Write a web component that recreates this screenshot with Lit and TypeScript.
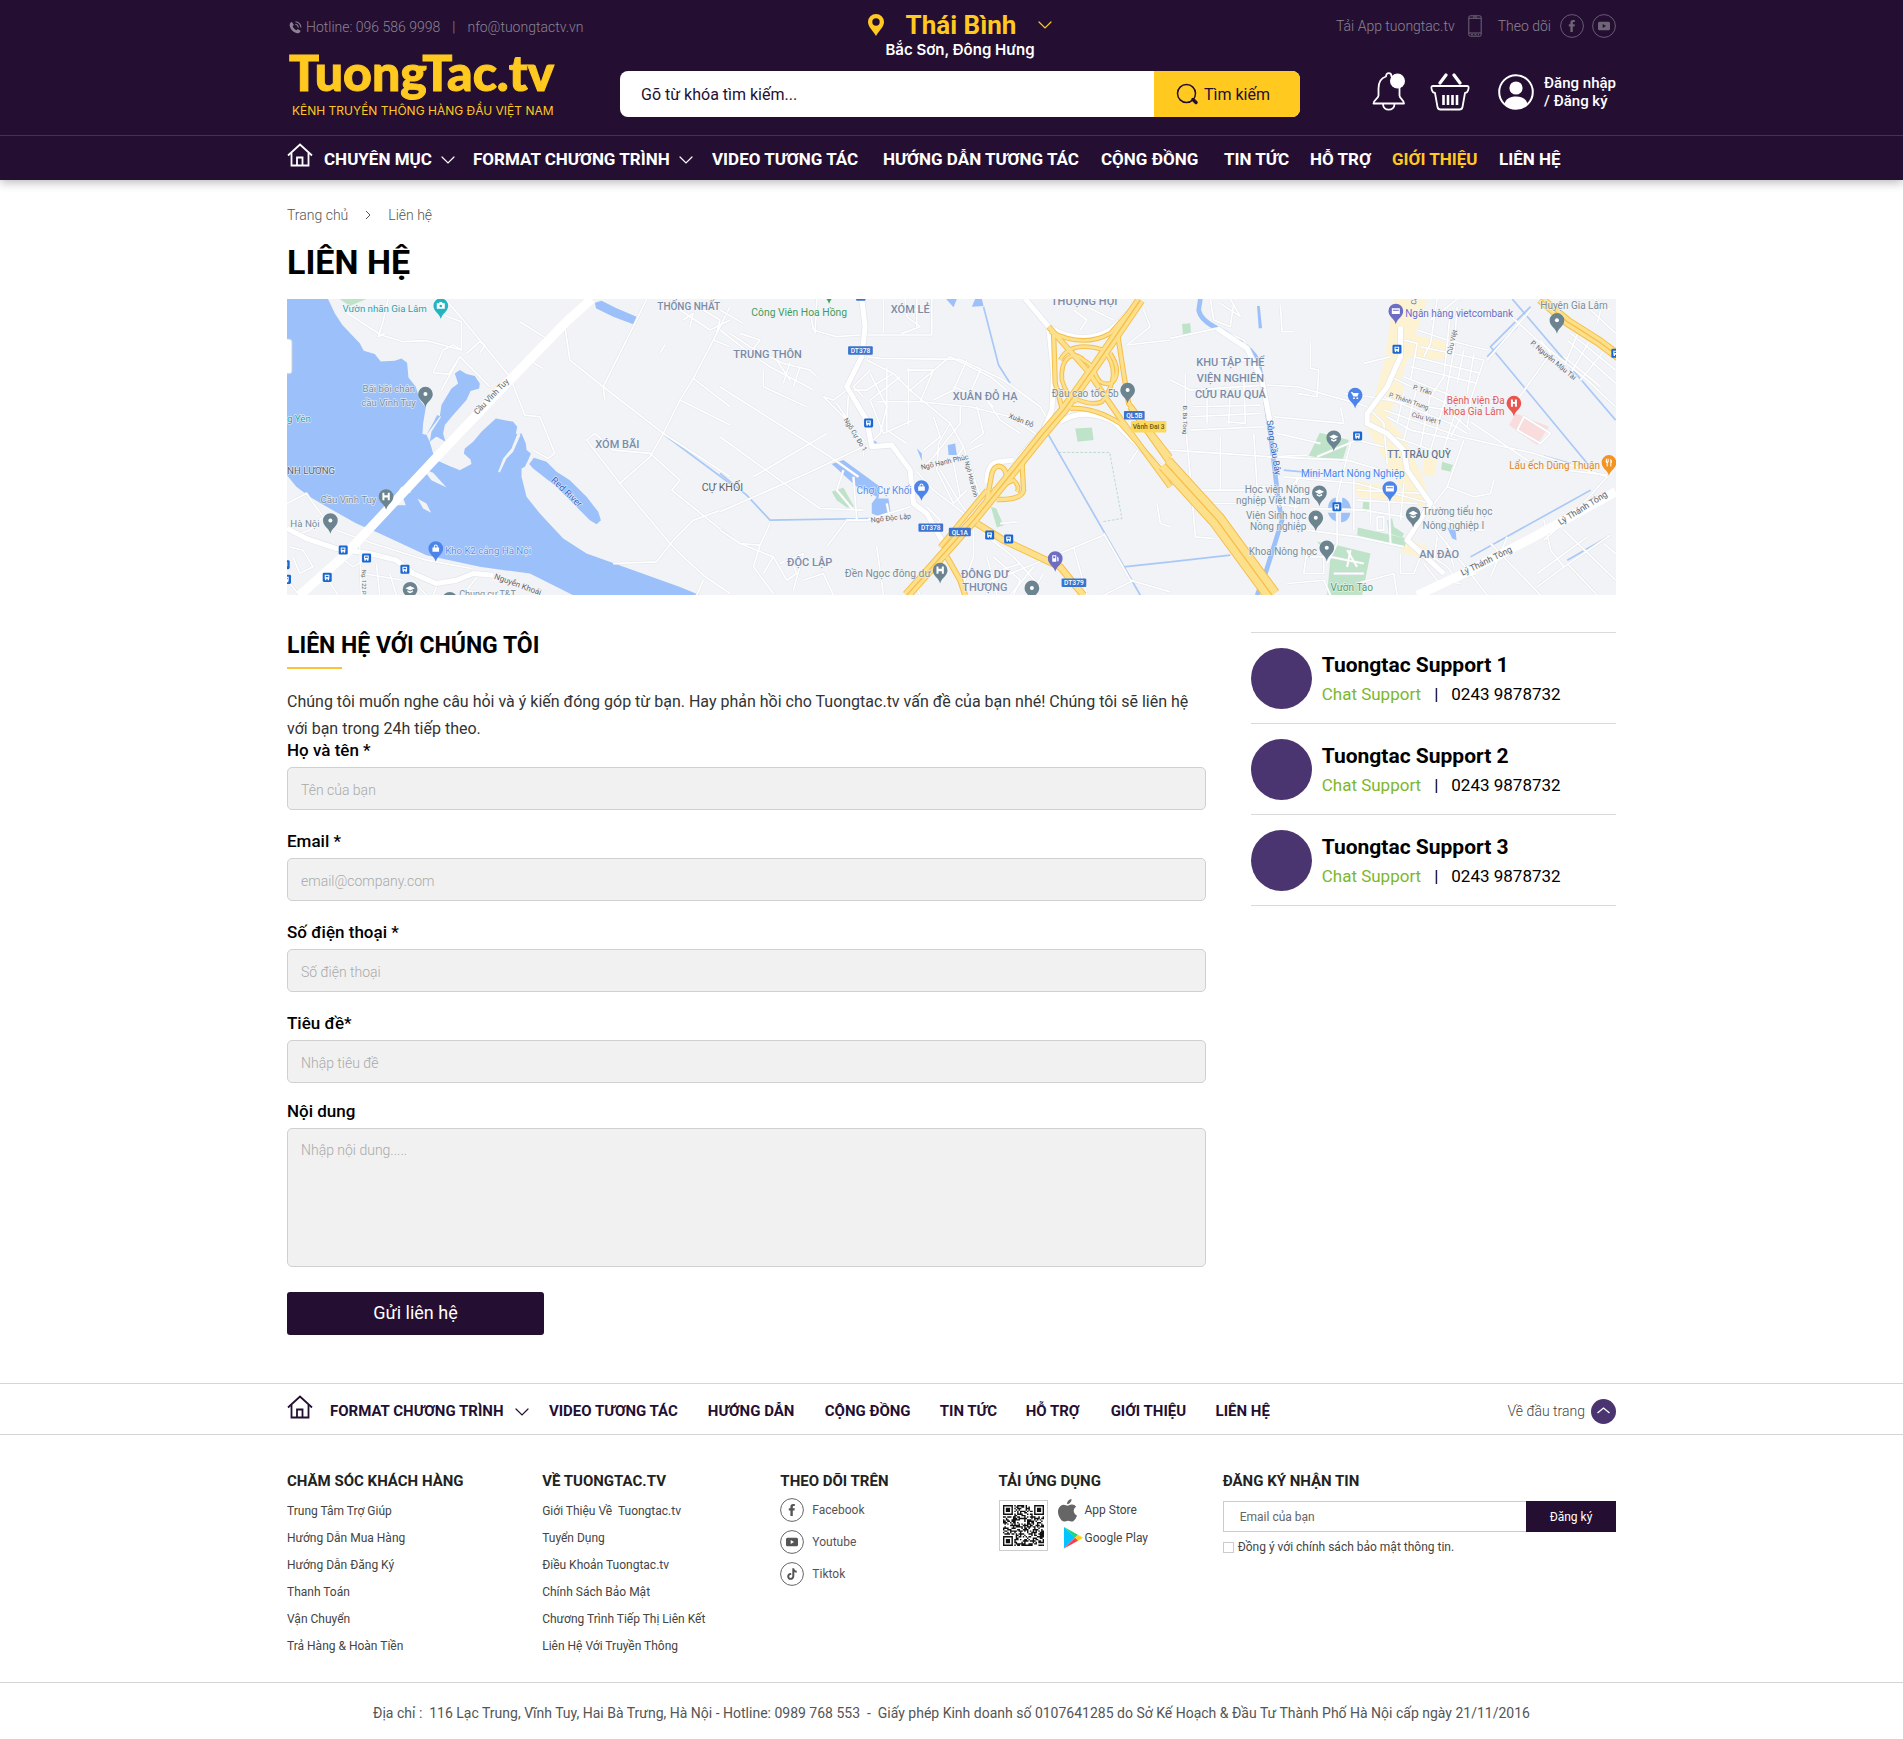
import { LitElement, html, svg, css, nothing } from "lit";
import { customElement } from "lit/decorators.js";
import { classMap } from "lit/directives/class-map.js";

/* ---------- icons ---------- */

const chevronDown = html`<svg class="chevron" viewBox="0 0 14 8" width="14" height="8" aria-hidden="true">
  <path d="M1 1 L7 7 L13 1" fill="none" stroke="currentColor" stroke-width="1.2" stroke-linecap="round" />
</svg>`;

const homeIcon = html`<svg viewBox="0 0 26 24" width="26" height="24" aria-hidden="true">
  <g fill="none" stroke="currentColor" stroke-width="1.8" stroke-linejoin="miter">
    <path d="M1 12.5 L13 1.5 L25 12.5" />
    <path d="M4.5 10 V22.5 H21.5 V10" />
    <path d="M10 22 V14.5 H15.5 V22" />
  </g>
</svg>`;

const facebookIcon = (size: number) => html`<svg viewBox="0 0 24 24" width=${size} height=${size} aria-hidden="true">
  <circle cx="12" cy="12" r="11.4" fill="none" stroke="currentColor" stroke-width="0.9" />
  <path fill="currentColor" d="M10.4 18v-5.4H8.8v-2.3h1.6V8.7c0-1.9 1-2.8 2.7-2.8h1.7v2.2h-1.1c-.7 0-.9.3-.9.9v1.3h2l-.3 2.3h-1.7V18z" />
</svg>`;

const youtubeIcon = (size: number) => html`<svg viewBox="0 0 24 24" width=${size} height=${size} aria-hidden="true">
  <circle cx="12" cy="12" r="11.4" fill="none" stroke="currentColor" stroke-width="0.9" />
  <path fill="currentColor" fill-rule="evenodd" d="M7.5 7.8h9a1.5 1.5 0 0 1 1.5 1.5v5.4a1.5 1.5 0 0 1-1.5 1.5h-9A1.5 1.5 0 0 1 6 14.7V9.3a1.5 1.5 0 0 1 1.5-1.5zM10.7 10v4l3.3-2z" />
</svg>`;

const tiktokIcon = (size: number) => html`<svg viewBox="0 0 24 24" width=${size} height=${size} aria-hidden="true">
  <circle cx="12" cy="12" r="11.4" fill="none" stroke="currentColor" stroke-width="0.9" />
  <path fill="currentColor" d="M12.3 6.2h1.9c.2 1.5 1 2.4 2.5 2.6v1.9c-.9 0-1.7-.3-2.4-.8v4c0 2.4-1.6 3.9-3.6 3.9s-3.5-1.5-3.5-3.4c0-2.2 1.8-3.7 4-3.4v2c-1.2-.3-2 .4-2 1.4 0 .9.7 1.5 1.5 1.5 1 0 1.6-.6 1.6-1.8z" />
</svg>`;

/* Code image: three finder squares around a seeded module field. */
const qrPath = (() => {
  const n = 29;
  let seed = 20211;
  const next = () => (seed = (seed * 1103515245 + 12345) % 2147483648) / 2147483648;
  const inFinder = (x: number, y: number) =>
    (x < 8 && y < 8) || (x > n - 9 && y < 8) || (x < 8 && y > n - 9);
  let d = "";
  for (let y = 0; y < n; y++)
    for (let x = 0; x < n; x++) if (!inFinder(x, y) && next() > 0.46) d += `M${x} ${y}h1v1h-1z`;
  for (const [x, y] of [[0, 0], [n - 7, 0], [0, n - 7]])
    d += `M${x} ${y}h7v1h-7zM${x} ${y + 6}h7v1h-7zM${x} ${y + 1}h1v5h-1zM${x + 6} ${y + 1}h1v5h-1zM${x + 2} ${y + 2}h3v3h-3z`;
  return d;
})();

/* ---------- data ---------- */

type NavEntry = { label: string; menu?: boolean; active?: boolean };

const mainNav: NavEntry[] = [
  { label: "CHUYÊN MỤC", menu: true },
  { label: "FORMAT CHƯƠNG TRÌNH", menu: true },
  { label: "VIDEO TƯƠNG TÁC" },
  { label: "HƯỚNG DẪN TƯƠNG TÁC" },
  { label: "CỘNG ĐỒNG" },
  { label: "TIN TỨC" },
  { label: "HỖ TRỢ" },
  { label: "GIỚI THIỆU", active: true },
  { label: "LIÊN HỆ" },
];

const footerNav: NavEntry[] = [
  { label: "FORMAT CHƯƠNG TRÌNH", menu: true },
  { label: "VIDEO TƯƠNG TÁC" },
  { label: "HƯỚNG DẪN" },
  { label: "CỘNG ĐỒNG" },
  { label: "TIN TỨC" },
  { label: "HỖ TRỢ" },
  { label: "GIỚI THIỆU" },
  { label: "LIÊN HỆ" },
];

const fields = [
  { id: "name", label: "Họ và tên *", hint: "Tên của bạn", type: "text" },
  { id: "email", label: "Email *", hint: "email@company.com", type: "email" },
  { id: "phone", label: "Số điện thoại *", hint: "Số điện thoại", type: "tel" },
  { id: "subject", label: "Tiêu đề*", hint: "Nhập tiêu đề", type: "text" },
];

const careLinks = ["Trung Tâm Trợ Giúp", "Hướng Dẫn Mua Hàng", "Hướng Dẫn Đăng Ký", "Thanh Toán", "Vận Chuyển", "Trả Hàng & Hoàn Tiền"];
const aboutLinks = ["Giới Thiệu Về  Tuongtac.tv", "Tuyển Dụng", "Điều Khoản Tuongtac.tv", "Chính Sách Bảo Mật", "Chương Trình Tiếp Thị Liên Kết", "Liên Hệ Với Truyền Thông"];

/* ---------- map ---------- */

type MapText = [x: number, y: number, text: string, color: string, size: number, opts?: { end?: boolean; mid?: boolean; bold?: boolean; rotate?: number }];

const SLATE = "#7c8ba8";
const GREY = "#7b8d99";
const DARK = "#5f6368";

/* Each sheet is drawn in its own coordinates and shifted to its place on the map. */
const sheets = [
  {
    dx: -22,
    green: ["M180 27L260 27L210 48Z"],
    water: [
      "M22 27L145 27L165 70L188 105L240 160L252 182L285 192L303 214L345 212L365 205L382 218L386 262L408 290L420 330L438 352L430 400L428 432L440 434L462 395L472 375L484 380L455 425L450 455L470 440L497 455L490 430L495 405L520 375L560 330L572 303L598 295L600 280L585 258L560 252L540 240L525 250L535 280L515 295L485 345L480 380L440 434L450 455L460 490L475 512L515 530L540 540L575 522L572 508L552 490L555 475L580 455L605 425L648 385L700 395L712 410L708 432L725 430L738 460L740 480L753 490L745 510L735 530L725 535L725 560L740 620L780 670L850 745L920 790L1060 840L1200 890L1260 915L880 915L750 850L600 830L440 795L300 730L230 700L150 655L90 620L50 590L22 555Z",
      "M762 503L800 515L830 545L870 570L920 620L955 665L963 690L950 702L930 690L880 640L830 590L760 535L748 522Z",
      "M945 38L965 32L1010 55L1070 80L1060 103L1000 80L948 55Z",
    ],
    islands: ["M428 535L460 548L500 592L455 570Z", "M413 625L440 640L454 668L430 655Z", "M340 625L365 590L395 590L392 608L365 610L378 645L345 645Z", "M655 545L670 505L695 475L715 425L722 435L700 485L680 505L660 547Z", "M450 455L470 440L497 456L480 485L515 530L475 512Z"],
    streams: ["M1150 432L1350 580"],
    thin: [
      "M190 60L280 120L305 135L370 155L440 152L545 180L545 95L490 75", "M325 27L310 95L295 140L315 130", "M545 180L520 165L490 180L460 248L508 252L540 200L485 300",
      "M500 32L555 95L690 260L735 375L780 380L825 490L805 505L760 480", "M540 200L630 290", "M560 190L600 155L615 165L600 190", "M720 95L800 145", "M745 210L790 235",
      "M855 110L870 210L970 290L1150 430L1350 560", "M1100 27L1070 90L970 290L975 330", "M1350 50L1300 150L1240 265L1200 330L1150 430L1110 500L1020 580", "M1300 150L1350 170",
      "M1240 265L1350 350", "M1200 330L1350 405", "M920 450L945 430L1000 480L1110 490L1200 570L1175 600L1350 740", "M920 450L1020 580L1170 760L1210 800L1270 855L1350 910",
      "M1350 650L1240 690L1180 750L1130 815L1000 820", "M1200 60L1290 120L1350 90", "M1210 90L1240 70L1230 110", "M1270 60L1320 90L1310 130", "M1270 870L1250 915", "M1140 190L1155 165",
      "M22 640L80 610L130 680L90 720L60 730", "M30 770L70 780L100 830L60 850L40 800", "M170 720L280 760L440 810L575 835", "M180 800L220 830L270 800", "M240 760L245 915", "M250 850L370 870", "M290 820L300 915", "M140 860L175 915",
      "M330 850L350 915", "M400 870L440 915", "M470 890L460 915", "M600 850L560 900L640 915", "M22 870L60 915",
    ],
    wide: ["M22 715L80 745L170 775L270 790L350 810L400 850L470 880L530 870L580 850L640 855"],
    huge: ["M60 915L190 800L490 480L700 260L860 95L935 27"],
    gold: [], hair: [],
  },
  {
    dx: 1298,
    green: ["M1065 415L1115 412L1120 450L1072 455Z", "M335 605L370 592L402 650L380 652L350 630Z", "M812 650L828 655L850 705L830 712Z"],
    water: ["M335 522L370 510L480 590L475 625L505 625L512 670L480 680L455 670L455 640L470 620L410 590Z", "M683 465L705 460L710 495L685 495Z", "M590 475L605 490L605 512Z", "M678 27L710 27L700 52Z", "M765 27L785 27L790 48L755 50Z", "M462 450L475 462L462 462Z"],
    islands: [],
    streams: ["M0 550L80 615L150 690L450 685", "M790 50L835 225L870 280", "M985 435L1260 915", "M1210 830L1350 815", "M935 330L960 350"],
    thin: [
      "M0 120L90 190L150 230L280 300", "M0 60L70 100", "M30 130L90 170L190 220L270 240L290 260", "M130 240L130 290L260 350", "M170 210L210 270", "M210 215L190 280", "M240 230L220 290", "M90 190L120 150L60 130", "M0 290L330 500L415 560", "M0 440L220 600L300 655L430 660",
      "M0 665L260 550L430 470", "M100 560L320 430", "M270 60L280 120L350 140L420 135", "M440 135L635 135L635 27", "M490 27L490 130", "M555 27L560 80L600 110L545 130", "M520 60L630 60", "M590 27L590 110", "M440 200L480 205L720 208L850 270L960 350L990 400",
      "M440 210L520 250L570 300L690 400L730 470L780 620", "M520 250L440 300L400 300", "M570 300L690 200", "M470 335L600 335L750 350L870 380L960 440", "M500 230L500 420L560 460", "M540 260L450 330L490 430L580 390", "M565 230L565 405", "M600 335L640 240L560 240", "M690 200L810 260L860 300",
      "M740 210L700 300L640 330", "M780 240L750 310L700 290", "M770 350L790 430L750 460", "M820 350L800 330L840 390L900 430", "M720 350L720 400L640 500L600 540", "M640 380L660 440L610 480", "M690 400L655 460L650 540L700 640", "M730 470L700 520L720 620", "M660 540L720 640L750 680", "M590 545L640 600L745 680", "M620 650L660 690L640 720", "M700 640L740 600",
      "M290 27L285 130", "M380 300L340 330L310 320L390 400L350 340", "M385 310L380 400L430 450", "M430 320L400 290L450 240", "M450 250L500 350L480 430L430 480L430 500", "M400 560L410 690", "M370 540L350 600L400 660", "M0 720L60 760L120 765L150 700", "M60 760L160 800L200 870L230 850L210 800", "M120 765L100 830L160 910", "M160 800L130 850", "M180 820L250 790L220 900", "M320 770L380 690L440 690", "M250 870L310 850L340 915", "M440 690L570 650", "M500 640L510 690",
      "M760 710L760 800L730 880", "M790 730L880 800L960 890", "M820 800L900 870L880 915", "M840 840L900 820", "M940 830L870 915", "M970 850L930 915", "M800 800L830 915", "M750 900L1150 735", "M1060 770L1100 915", "M1150 730L1230 870L1350 905", "M1240 870L1150 915", "M840 700L890 695", "M1310 640L1320 700L1350 710", "M1270 60L1290 110L1220 165L1350 150", "M1060 60L1100 90L1080 120", "M1100 50L1180 90", "M1225 520L1260 470", "M750 480L790 460",
      "M470 770L490 915", "M600 915L580 870",
    ],
    wide: ["M425 27L435 110L425 200L380 290L440 390L455 470L515 465L570 540L580 640L620 670L665 750", "M915 27L985 110L1000 250L995 360L970 420L900 500", "M985 110Q1080 170 1170 120L1245 50", "M800 580Q800 520 835 515L880 510", "M1020 395Q1090 350 1180 395L1350 560"],
    huge: [],
    hair: ["M1015 487H1168L1205 685L1145 695"],
    gold: [
      [12, "M985 110L1100 240L1200 385L1350 590"], [10, "M1000 130L1005 280L1030 370L960 440"], [10, "M1190 120L1210 250L1225 340L1350 500"], [8, "M990 125Q1090 175 1170 130L1240 50"],
      [9, "M1050 355Q1120 350 1200 400L1350 570"], [8, "M1170 190C1210 250 1180 300 1140 275C1120 260 1130 230 1090 210C1060 180 1020 200 1025 270Q1040 320 1070 335"], [8, "M1020 210Q1050 150 1150 180Q1210 250 1145 335Q1110 350 1055 320"],
      [10, "M800 630L815 550C825 510 870 530 855 575L820 620"], [10, "M905 510L910 600Q905 630 830 628"], [8, "M820 600L880 570Q900 590 890 605"],
      [24, "M560 915L760 690L890 530L970 430L1030 360L1130 220L1260 30"], [10, "M660 770L800 600"], [16, "M770 700L850 750L1020 830L1060 880L1090 915"], [12, "M680 800L720 870L735 915"], [14, "M1230 350L1350 520"],
    ] as [number, string][],
  },
  {
    dx: 2648,
    green: ["M35 102L60 100L62 130L38 133Z", "M448 428L535 450L515 515L415 497Z", "M815 515L847 525L840 545L812 538Z", "M578 635L603 635L603 658L576 658Z", "M650 690L665 685L670 710L700 730L695 742L655 730Z", "M562 712L710 745L700 775L560 735Z", "M440 755L500 765L600 790L575 915L470 915L480 800Z"],
    pink: ["M1035 370L1135 410L1100 465L1015 405Z"],
    sand: ["M670 27L770 27L700 240L655 390L700 440L760 570L780 640L740 650L690 590L650 520L580 400L610 330L640 220Z", "M700 130L830 155L820 210L700 200Z", "M640 260L700 290L690 330L640 320Z", "M760 500L800 510L790 560L755 550Z", "M550 570L720 600L770 640L560 620Z", "M700 740L770 770L770 810L690 785Z"],
    water: ["M475 640Q485 620 500 622L498 650L472 655ZM515 622Q535 625 542 655L515 655ZM472 668L500 668L500 695Q480 690 472 668ZM512 668L540 668Q535 695 512 697Z", "M830 712L855 720L858 750L845 745Z", "M260 48L268 48L275 115L265 115Z"],
    islands: [],
    streams: ["M1025 27L1335 390", "M1080 50L960 170L1250 520", "M1040 110L950 200", "M340 540L450 550", "M0 815L180 795", "M1120 498L1200 520", "M900 800L1260 600", "M1190 810L1320 735"],
    river: "M90 27L85 60Q90 90 140 115Q250 170 265 220L285 330L300 430L325 640L335 690L285 850L260 915",
    thin: [
      "M0 145L140 115L220 150L280 270", "M120 27L130 90L180 110L190 40", "M150 40L210 80L180 27", "M330 45L335 125L370 125", "M290 285L380 290L560 340L590 350", "M0 270L60 300L280 285", "M45 250L45 400L60 560L75 740L130 745", "M70 350L270 345", "M60 380L270 370", "M110 300L110 400", "M180 290L175 400", "M220 260L225 400L170 395", "M140 210L240 210", "M0 480L150 490L300 500L410 495", "M60 420L280 410", "M150 440L150 600", "M250 430L260 590L290 590", "M290 500L530 510L700 560", "M60 600L300 600L330 650", "M80 640L300 640", "M310 380L520 400", "M320 430L450 460", "M420 155L420 235L445 240L440 320L380 310", "M580 220L660 200", "M520 310L600 320L680 335L830 360L900 420", "M510 350L520 400", "M590 350L640 400L650 520",
      "M750 170L940 210L900 330L840 440", "M700 150L740 160L720 270", "M740 120L830 150L950 180", "M780 90L860 27", "M800 27L780 160L760 200", "M840 60L820 260L780 320", "M860 50L850 180L820 350", "M880 180L860 280", "M910 190L890 310", "M730 200L930 250", "M720 230L920 280", "M700 260L900 340L890 410", "M660 260L830 340", "M640 320L840 400L890 430", "M640 360L870 440L1090 490L1310 560", "M700 310L680 400", "M740 290L700 450", "M780 310L750 470", "M820 340L780 480", "M850 380L810 510", "M880 450L830 590L760 680", "M650 380L720 420L860 450", "M670 440L840 500",
      "M1310 560L1200 680L1120 750", "M950 210L1080 60", "M1000 60L1100 150L1250 270L1335 350", "M1110 150L1140 190L1040 330", "M900 395L1100 530L1310 555", "M1060 380L1140 430L1110 460L1040 420Z", "M1200 130L1335 240", "M1190 150L1335 280", "M1180 200L1290 290", "M1230 110L1180 230", "M1270 130L1200 250", "M1310 170L1230 270", "M1260 60L1335 130", "M1290 60L1280 100", "M1320 60L1270 27",
      "M540 460L520 540L500 620L500 760L470 820", "M440 500L560 450L640 470", "M340 560L560 580L780 640", "M400 600L380 650L310 640", "M380 560L370 700", "M420 655L580 660L700 680", "M410 720L560 740L700 770", "M550 560L550 720", "M600 580L600 700", "M655 630L660 760", "M700 580L690 690", "M560 600L760 610", "M560 630L740 640", "M620 680L640 680L640 720L620 720Z", "M390 560L360 590L390 610", "M410 780L400 850L460 850L460 800L410 800", "M480 800L580 820", "M490 850L580 850", "M530 780L560 830", "M540 780L530 830", "M350 880L460 870L480 915", "M560 880L670 850L680 915",
      "M780 640L830 690L900 720L940 720", "M830 590L910 620L960 610L970 570", "M920 640L900 720", "M780 700L900 850L950 915", "M730 760L830 830L860 870", "M800 740L790 820", "M830 760L850 830", "M690 790L690 850L730 850L750 800", "M760 820L800 870L870 880", "M960 760L1110 915", "M1010 740L960 860", "M1120 690L1140 780", "M1190 820L1280 915", "M1180 720L1335 870", "M1250 740L1100 850", "M1320 735L1180 830L1100 890", "M1300 760L1335 790", "M1140 780L1180 830", "M880 860L920 850",
    ],
    wide: ["M690 110L690 200L650 290L590 370L590 400L650 430L700 480L710 540L780 640L710 750L820 850", "M140 115L230 175L275 270L300 400"],
    huge: ["M740 915L880 850L1100 735L1335 605"],
    hair: [],
    gold: [[46, "M-15 520L140 690L305 915"], [24, "M1110 27L1190 95L1285 155L1345 200"]] as [number, string][],
  },
] as any[];

const mapTexts: MapText[] = [
  [166, 40, "Vườn nhãn Gia Lâm", "#1fa5b0", 29],
  [1110, 34, "THỐNG NHẤT", SLATE, 30, { bold: true }],
  [384, 280, "Bãi bồi chân", GREY, 29, { end: true }],
  [386, 322, "cầu Vĩnh Tuy", GREY, 29, { end: true }],
  [0, 368, "g Yên", "#1fa5b0", 29],
  [924, 446, "XÓM BÃI", SLATE, 33, { bold: true }],
  [0, 525, "NH LƯƠNG", DARK, 29],
  [268, 612, "Cầu Vĩnh Tuy", GREY, 29, { end: true }],
  [10, 682, "Hà Nội", GREY, 29],
  [474, 765, "Kho K2 cảng Hà Nội", "#5b8def", 29],
  [570, 348, "Cầu Vĩnh Tuy", DARK, 24, { rotate: -46 }],
  [790, 545, "Red River", "#2f65c8", 28, { rotate: 44 }],
  [620, 838, "Nguyễn Khoái", DARK, 24, { rotate: 20 }],
  [516, 894, "Chung cư T&T", GREY, 27],
  [224, 812, "Ng. 122 P", DARK, 17, { rotate: 90 }],
  [1392, 52, "Công Viên Hoa Hồng", "#3f9a5b", 31],
  [1810, 43, "XÓM LẺ", SLATE, 33, { bold: true }],
  [1338, 176, "TRUNG THÔN", SLATE, 33, { bold: true }],
  [2290, 18, "THƯỢNG HỘI", SLATE, 33, { bold: true }],
  [1996, 302, "XUÂN ĐỖ HẠ", SLATE, 33, { bold: true }],
  [1243, 577, "CỰ KHỐI", DARK, 32],
  [1499, 800, "ĐỘC LẬP", SLATE, 33, { bold: true }],
  [2493, 293, "Đầu cao tốc 5b", GREY, 30, { end: true }],
  [1873, 585, "Chợ Cự Khối", "#5b8def", 30, { end: true }],
  [1930, 833, "Đền Ngọc đông dư", GREY, 31, { end: true }],
  [2092, 835, "ĐÔNG DƯ", SLATE, 33, { mid: true, bold: true }],
  [2092, 875, "THƯỢNG", SLATE, 33, { mid: true, bold: true }],
  [1668, 362, "Ngõ Cự Đo 1", DARK, 20, { rotate: 58 }],
  [1902, 512, "Ngõ Hạnh Phúc", DARK, 21, { rotate: -13 }],
  [2032, 488, "Ngõ Hòa Bình", DARK, 18, { rotate: 76 }],
  [1751, 670, "Ngõ Độc Lập", DARK, 21, { rotate: -6 }],
  [2162, 356, "Xuân Đỗ", DARK, 21, { rotate: 22 }],
  [2828, 200, "KHU TẬP THỂ", SLATE, 33, { mid: true, bold: true }],
  [2828, 249, "VIỆN NGHIÊN", SLATE, 33, { mid: true, bold: true }],
  [2828, 297, "CỨU RAU QUẢ", SLATE, 33, { mid: true, bold: true }],
  [3352, 55, "Ngân hàng vietcombank", "#6a6fc4", 30],
  [3757, 31, "Huyện Gia Lâm", GREY, 30],
  [3650, 315, "Bệnh viện Đa", "#e25a5a", 30, { end: true }],
  [3650, 347, "khoa Gia Lâm", "#e25a5a", 30, { end: true }],
  [3298, 476, "TT. TRÂU QUỲ", "#67788f", 30, { bold: true }],
  [3040, 535, "Mini-Mart Nông Nghiệp", "#4a86ee", 30],
  [3066, 583, "Học viện Nông", GREY, 30, { end: true }],
  [3066, 614, "nghiệp Việt Nam", GREY, 30, { end: true }],
  [3056, 660, "Viện Sinh học", GREY, 30, { end: true }],
  [3056, 692, "Nông nghiệp", GREY, 30, { end: true }],
  [3088, 766, "Khoa Nông học", GREY, 30, { end: true }],
  [3404, 648, "Trường tiểu học", GREY, 30],
  [3404, 688, "Nông nghiệp I", GREY, 30],
  [3394, 775, "AN ĐÀO", SLATE, 33, { bold: true }],
  [3936, 511, "Lẩu ếch Dũng Thuận", "#dd8722", 30, { end: true }],
  [3128, 875, "Vườn Táo", "#579a68", 30],
  [2936, 365, "Sông Cầu Bây", "#2f65c8", 27, { rotate: 81 }],
  [2686, 320, "Đ. Bà Tông", DARK, 18, { rotate: 90 }],
  [3374, 270, "P. Trần", DARK, 20, { rotate: 18 }],
  [3302, 292, "P. Thành Trung", DARK, 19, { rotate: 19 }],
  [3370, 352, "Cửu Việt 1", DARK, 20, { rotate: 16 }],
  [3490, 168, "Cửu Việt", DARK, 20, { rotate: -76 }],
  [3726, 134, "P. Nguyễn Mậu Tài", DARK, 21, { rotate: 40 }],
  [3524, 830, "Lý Thánh Tông", DARK, 26, { rotate: -26 }],
  [3818, 678, "Lý Thánh Tông", DARK, 26, { rotate: -32 }],
  [3384, 18, "Cổ", DARK, 22, { rotate: -80 }],
];

type Pin = [x: number, y: number, color: string, glyph: string];
const pins: Pin[] = [
  [461, 20, "#22b5c0", "cam"], [415, 285, "#6b8490", "dot"], [297, 592, "#6b8490", "bridge"], [130, 664, "#6b8490", "dot"],
  [446, 748, "#4d84ea", "bag"], [369, 870, "#6b8490", "cap"], [488, 900, "#6b8490", "dot"], [1625, -25, "#34a853", "dot"],
  [2520, 273, "#6b8490", "dot"], [1902, 565, "#4d84ea", "bag"], [1958, 813, "#6b8490", "bridge"], [2303, 778, "#6d6dc4", "fuel"],
  [2233, 866, "#6b8490", "dot"], [3324, 36, "#6d6dc4", "card"], [3202, 288, "#4d84ea", "cart"], [3138, 416, "#6b8490", "cap"],
  [3306, 568, "#4d84ea", "card"], [3095, 581, "#6b8490", "cap"], [3084, 656, "#6b8490", "dot"], [3117, 746, "#6b8490", "dot"],
  [3376, 645, "#6b8490", "cap"], [3807, 64, "#6b8490", "dot"], [3678, 312, "#ea5550", "hosp"], [3963, 490, "#f29423", "food"],
];

const pinGlyph: Record<string, string> = {
  dot: "M-6 0a6 6 0 1 0 12 0a6 6 0 1 0-12 0z",
  cam: "M-12-7h6l3-4h6l3 4h6v16h-24zM-4 1a4 4 0 1 0 8 0a4 4 0 1 0-8 0z",
  bridge: "M-11-11h6v7h10v-7h6v22h-6v-8h-10v8h-6z",
  bag: "M-10-3h4v-3a6 6 0 0 1 12 0v3h4v13h-20zM-3-3h6v-3a3 3 0 0 0-6 0z",
  cap: "M-14-3L0-10L14-3L0 4ZM-8 3L0 7L8 3V8L0 12L-8 8Z",
  fuel: "M-9-10h12v20h-12zM-6-7h6v6h-6zM5-6l5 4v10h-4v-8z",
  card: "M-12-8h24v17h-24zM-9-4h18v3h-18z",
  cart: "M-13-9h5l2 3h17l-4 10h-12zM-6 7h5v5h-5zM4 7h5v5h-5z",
  hosp: "M-9-11h6v8h6v-8h6v22h-6v-9h-6v9h-6z",
  food: "M-9-11h3v8h2v-8h3v10l-3 3v10h-3v-10l-3-3zM4-11q6 3 5 13h-2v10h-3z",
};

const busStops = [[168, 752], [238, 776], [353, 810], [120, 834], [-6, 796], [-2, 840], [1743, 371], [2106, 707], [2163, 719], [3327, 150], [3209, 410], [3147, 622], [3983, 162]];
const shields: [number, number, number, string, string, string][] = [
  [1682, 142, 74, "DT378", "#3a74cf", "#fff"], [1893, 673, 74, "DT378", "#3a74cf", "#fff"], [1984, 686, 66, "QL1A", "#3a74cf", "#fff"],
  [2509, 336, 62, "QL5B", "#3a74cf", "#fff"], [2530, 366, 106, "Vành Đai 3", "#fbd95d", "#6b5a18"], [2322, 838, 74, "DT379", "#3a74cf", "#fff"], [1706, -20, 28, "", "#3a74cf", "#fff"],
];

@customElement("location-map")
export class LocationMap extends LitElement {
  static styles = css`
    :host { display: block; }
    .map { display: block; width: 100%; height: auto; background: #f1f3f6; }
    .label { font-family: Roboto, "Liberation Sans", sans-serif; paint-order: stroke; stroke: #f6f8fa; stroke-width: 4px; stroke-opacity: 0.75; stroke-linejoin: round; }
    .strong { font-weight: 500; }
    .shield { font-family: Roboto, "Liberation Sans", sans-serif; font-size: 20px; font-weight: 500; text-anchor: middle; }
    .end { text-anchor: end; }
    .mid { text-anchor: middle; }
  `;

  private line(d: string, color: string, width: number) {
    return svg`<path d=${d} fill="none" stroke=${color} stroke-width=${width} stroke-linejoin="round" />`;
  }

  render() {
    return html`<svg class="map" viewBox="0 0 3984 888" role="img" aria-label="Bản đồ">
      ${sheets.map((s) => svg`<g transform="translate(${s.dx} -27)">
        ${(s.sand ?? []).map((d: string) => svg`<path d=${d} fill="#fdf3d3" />`)}
        ${(s.pink ?? []).map((d: string) => svg`<path d=${d} fill="#fbdcdc" />`)}
        ${s.green.map((d: string) => svg`<path d=${d} fill="#bfe3c9" />`)}
        ${s.water.map((d: string) => svg`<path d=${d} fill="#9cc0f9" />`)}
        ${s.islands.map((d: string) => svg`<path d=${d} fill="#f1f3f6" />`)}
        ${s.hair.map((d: string) => svg`<path d=${d} fill="none" stroke="#a5cdb3" stroke-width="2" stroke-dasharray="8 5" />`)}
        ${s.streams.map((d: string) => this.line(d, "#a9c8f7", 5))}
        ${s.river ? this.line(s.river, "#9cc0f9", 14) : nothing}
        ${s.thin.map((d: string) => this.line(d, "#e2e5ea", 8))}
        ${s.thin.map((d: string) => this.line(d, "#ffffff", 5))}
        ${s.wide.map((d: string) => this.line(d, "#e2e5ea", 19))}
        ${s.wide.map((d: string) => this.line(d, "#ffffff", 15))}
        ${s.huge.map((d: string) => this.line(d, "#ffffff", 27))}
      </g>`)}
      ${sheets.map((s) => svg`<g transform="translate(${s.dx} -27)">
        ${s.gold.map(([w, d]: [number, string]) => this.line(d, "#f6bf4b", w + 6))}
        ${s.gold.map(([w, d]: [number, string]) => this.line(d, "#fde08b", w))}
        ${s.gold.filter(([w]: [number, string]) => w > 20).map(([, d]: [number, string]) => this.line(d, "#f6bf4b", 4))}
      </g>`)}
      <rect x="-10" y="120" width="25" height="104" rx="10" fill="#fff" stroke="#c9d2e0" stroke-width="3" />
      ${busStops.map(([x, y]) => svg`<g transform="translate(${x} ${y})">
        <rect x="-13" y="-13" width="27" height="27" rx="4" fill="#1a67d2" />
        <path d="M-7-7h14v12h-14zM-6 5h4v4h-4zM2 5h4v4h-4z" fill="#fff" />
        <rect x="-4" y="-4" width="8" height="4" fill="#1a67d2" />
      </g>`)}
      ${shields.map(([x, y, w, t, bg, fg]) => svg`<rect x=${x} y=${y} width=${w} height=${t.length > 6 ? 34 : 25} rx="3" fill=${bg} />
        <text class="shield" x=${x + w / 2} y=${y + (t.length > 6 ? 24 : 20)} fill=${fg}>${t}</text>`)}
      ${mapTexts.map(([x, y, t, color, size, o]) => svg`<text
        class=${classMap({ label: true, strong: !!o?.bold, end: !!o?.end, mid: !!o?.mid })}
        fill=${color} font-size=${size} transform="translate(${x} ${y}) rotate(${o?.rotate ?? 0})">${t}</text>`)}
      ${pins.map(([x, y, color, g]) => svg`<g transform="translate(${x} ${y})">
        <path d="M0 40C-4 22-22 18-22 0A22 22 0 0 1 22 0C22 18 4 22 0 40Z" fill=${color} />
        <path d=${pinGlyph[g]} fill="#fff" fill-rule="evenodd" />
      </g>`)}
    </svg>`;
  }
}

@customElement("app-root")
export class AppRoot extends LitElement {
  static styles = css`
    :host { display: block; background: #fff; color: #000; font-family: Roboto, "Liberation Sans", sans-serif; font-size: 16px; }
    * { box-sizing: border-box; }
    h1, h2, h3, p, ul { margin: 0; padding: 0; }
    ul { list-style: none; }
    a { color: inherit; text-decoration: none; }
    svg { display: block; flex: none; }
    button, input, textarea { font: inherit; margin: 0; }
    button { cursor: pointer; border: 0; background: none; color: inherit; padding: 0; }
    .wrap { width: 100%; max-width: 1329px; margin: 0 auto; }

    .header { background: #240f33; color: #fff; box-shadow: 0 2px 10px rgba(0, 0, 0, 0.3); position: relative; }
    .top { display: grid; grid-template-columns: 333px minmax(0, 1fr) 316px; height: 135px; }
    .brand { padding: 17px 0 0 2px; }
    .hotline { display: flex; align-items: center; gap: 4px; font-size: 14px; line-height: 20px; font-weight: 300; color: #8b8391; }
    .bar { margin: 0 8px; }
    .logo { display: block; width: max-content; color: #ffc920; }
    .logo-name { display: block; font-family: Lato, "Liberation Sans", sans-serif; font-weight: 900; font-size: 50px; line-height: 60px; margin-top: 5px; -webkit-text-stroke: 1px #ffc920; }
    .logo-tag { display: block; font-family: Inter, "Liberation Sans", sans-serif; font-size: 12px; line-height: 18px; padding-left: 3px; }

    .place { display: flex; justify-content: center; align-items: center; gap: 22px; width: 100%; padding-top: 11px; color: #ffc920; font-size: 26px; line-height: 28px; font-weight: 700; }
    .area { text-align: center; font-size: 15px; line-height: 22px; font-weight: 600; font-family: Inter, "Liberation Sans", sans-serif; }
    .search { display: flex; height: 46px; margin-top: 10px; border-radius: 8px; overflow: hidden; background: #fff; }
    .search-text { flex: 1; min-width: 0; border: 0; outline: 0; padding: 0 21px; font-size: 16px; color: #240f33; background: none; }
    .search-text::placeholder { color: #240f33; opacity: 1; }
    .search-go { display: flex; align-items: center; justify-content: center; gap: 6px; width: 146px; padding-right: 8px; background: #ffc920; color: #240f33; font-size: 16px; }

    .side { display: flex; flex-direction: column; align-items: flex-end; }
    .follow { display: flex; align-items: center; padding-top: 14px; height: 38px; font-size: 14px; font-weight: 300; color: #8b8391; }
    .follow svg { color: #6f6577; }
    .phone { margin: 0 16px 0 13px; }
    .round { margin-left: 9px; }
    .round + .round { margin-left: 8px; }
    .account { display: flex; align-items: center; padding-top: 34px; }
    .basket { margin: 0 28px 0 24px; }
    .login { display: flex; align-items: center; gap: 10px; font-size: 15px; line-height: 18px; font-weight: 500; }

    .menu { border-top: 1px solid #43334f; }
    .menu-grid { display: grid; grid-template-columns: 37fr 149fr 239fr 171fr 218fr 123fr 86fr 82fr 107fr 117fr; align-items: center; height: 44px; font-size: 17px; font-weight: 700; white-space: nowrap; }
    .home { padding-bottom: 6px; }
    .entry { display: flex; align-items: center; gap: 9px; padding-top: 2px; }
    .entry .chevron { margin-top: 2px; }
    .on { color: #ffc920; }

    .crumbs { display: flex; align-items: center; gap: 17px; padding-top: 25px; font-size: 14px; line-height: 20px; font-weight: 300; color: #555; }
    .title { margin: 13px 0; font-size: 34px; line-height: 48px; font-weight: 700; }

    .columns { display: grid; grid-template-columns: minmax(0, 918fr) minmax(0, 365fr); column-gap: 45px; align-items: start; padding: 37px 0 48px; }
    .heading { font-size: 23px; line-height: 28px; font-weight: 700; }
    .heading::after { content: ""; display: block; width: 55px; height: 2px; margin-top: 7px; background: #fcc33a; }
    .lead { margin-top: 19px; font-size: 16px; line-height: 27px; color: #333; }
    .field { display: block; margin-bottom: 23px; }
    .field-last { margin: -3px 0 25px; }
    .caption { display: block; font-size: 17px; line-height: 16px; font-weight: 500; margin-bottom: 9px; }
    .box { display: block; width: 100%; height: 43px; padding: 2px 13px 0; border: 1px solid #d0d0d0; border-radius: 5px; background: #f1f1f1; font-size: 14px; font-weight: 300; outline-color: #4a3770; }
    .area-box { height: 139px; padding-top: 13px; resize: none; }
    .box::placeholder { color: #a9a9a9; opacity: 1; }
    .send { width: 257px; height: 43px; padding-bottom: 2px; border-radius: 3px; background: #240f33; color: #fff; font-size: 18px; }

    .support { border-top: 1px solid #dadada; }
    .agent { display: flex; align-items: center; gap: 10px; padding: 15px 0 14px; border-bottom: 1px solid #dadada; }
    .avatar { flex: none; width: 61px; height: 61px; border-radius: 50%; background: #4b3570; }
    .agent-name { padding-top: 2px; font-size: 21px; line-height: 29px; font-weight: 700; }
    .agent-info { display: flex; gap: 13px; font-size: 17px; line-height: 29px; }
    .chat { color: #7db72c; }

    .foot-menu { border: solid #d5d5d5; border-width: 1px 0; }
    .foot-grid { display: grid; grid-template-columns: 43fr 219fr 159fr 117fr 115fr 86fr 85fr 105fr 292fr 107fr; align-items: center; height: 50px; font-size: 15px; font-weight: 700; color: #240f33; white-space: nowrap; }
    .foot-grid .home { padding-bottom: 4px; }
    .foot-grid .entry { gap: 12px; padding-top: 4px; }
    .to-top { display: flex; align-items: center; justify-content: flex-end; gap: 6px; font-size: 14px; font-weight: 300; color: #444; padding-top: 4px; }
    .foot-cols { display: grid; grid-template-columns: 255fr 238fr 218fr 224fr 393fr; padding: 36px 0 22px; font-size: 12px; color: #444; }
    .foot-title { font-size: 15px; line-height: 20px; font-weight: 700; color: #222; margin-bottom: 7px; white-space: nowrap; }
    .links { line-height: 27px; white-space: pre; }
    .social { display: grid; gap: 8px; }
    .social-link { display: flex; align-items: center; gap: 8px; height: 24px; color: #555; }
    .apps { display: grid; grid-template-columns: 49px auto; justify-content: start; column-gap: 10px; padding-top: 2px; align-items: start; }
    .qr { border: 1px solid #ccc; padding: 3px; }
    .stores { display: grid; gap: 4px; margin-top: -2px; }
    .store { display: grid; grid-template-columns: 27px auto; align-items: center; height: 24px; }
    .play { margin-left: 6px; }
    .news { display: flex; height: 31px; margin-top: 2px; }
    .foot-title + .news { margin-top: 10px; }
    .news-mail { flex: 1; min-width: 0; padding: 0 16px; border: 1px solid #ccc; border-right: 0; font-size: 12px; background: #fff; }
    .news-mail::placeholder { color: #666; opacity: 1; }
    .news-go { width: 90px; background: #240f33; color: #fff; font-size: 12px; }
    .agree { display: flex; align-items: center; gap: 4px; margin-top: 7px; line-height: 16px; }
    .tick { appearance: none; flex: none; width: 11px; height: 11px; border: 1px solid #ccc; background: #fff; }
    .tick:checked { background: #4b3570; }
    .address { border-top: 1px solid #d5d5d5; padding: 20px 16px 16px; text-align: center; font-size: 14px; line-height: 20px; color: #555; white-space: pre-wrap; }
  `;

  private entry(e: NavEntry) {
    return html`<a href="#" class=${classMap({ entry: true, on: !!e.active })}>${e.label}${e.menu ? chevronDown : nothing}</a>`;
  }

  private header() {
    return html`<header class="header">
      <div class="wrap top">
        <div class="brand">
          <div class="hotline">
            <svg viewBox="0 0 14 14" width="13" height="13" aria-hidden="true">
              <path fill="currentColor" d="M3.2 1.2L5.2 4.3L3.9 5.6C4.6 7.4 6 8.9 8 9.9L9.4 8.6L12.4 10.5C12.3 12.2 11 13.4 9.3 13.2C4.8 12.5 1 8.5.7 4.2C.7 2.6 1.7 1.4 3.2 1.2Z" />
              <path fill="none" stroke="currentColor" stroke-width="1.1" d="M6.8 3.6A3.7 3.7 0 0 1 10 7M7 .9A6.2 6.2 0 0 1 12.9 7" />
            </svg>
            <span>Hotline: 096 586 9998</span><span class="bar">|</span><a href="mailto:nfo@tuongtactv.vn">nfo@tuongtactv.vn</a>
          </div>
          <a class="logo" href="#"><span class="logo-name">TuongTac.tv</span><span class="logo-tag">KÊNH TRUYỀN THÔNG HÀNG ĐẦU VIỆT NAM</span></a>
        </div>
        <div>
          <button class="place" type="button">
            <svg viewBox="0 0 16 22" width="16" height="22" aria-hidden="true"><path fill="currentColor" fill-rule="evenodd" d="M8 0a8 8 0 0 1 8 8c0 5-5 8.5-8 14C5 16.5 0 13 0 8a8 8 0 0 1 8-8zM8 4.3a3.7 3.7 0 1 0 0 7.4a3.7 3.7 0 0 0 0-7.4z" /></svg>
            <span>Thái Bình</span>${chevronDown}
          </button>
          <p class="area">Bắc Sơn, Đông Hưng</p>
          <form class="search" @submit=${(e: Event) => e.preventDefault()}>
            <input class="search-text" type="text" aria-label="Tìm kiếm" placeholder="Gõ từ khóa tìm kiếm..." />
            <button class="search-go" type="submit">
              <svg viewBox="0 0 22 22" width="22" height="22" aria-hidden="true"><g fill="none" stroke="currentColor"><circle cx="10.5" cy="10.5" r="9" stroke-width="1.5" /><path d="M17 16.5L20 19.5" stroke-width="3.4" stroke-linecap="round" /></g></svg>
              Tìm kiếm
            </button>
          </form>
        </div>
        <div class="side">
          <div class="follow">
            <a href="#">Tải App tuongtac.tv</a>
            <svg class="phone" viewBox="0 0 14 22" width="14" height="22" aria-hidden="true"><g fill="none" stroke="currentColor"><rect x=".8" y=".8" width="12.4" height="20.4" rx="1.5" /><path d="M1 3.3H13M1 18H13M5 2H9" /><path d="M3 19.7H11" stroke-dasharray="2 1.5" /></g></svg>
            <span>Theo dõi</span>
            <a class="round" href="#" aria-label="Facebook">${facebookIcon(24)}</a>
            <a class="round" href="#" aria-label="Youtube">${youtubeIcon(24)}</a>
          </div>
          <div class="account">
            <a href="#" aria-label="Thông báo"><svg viewBox="0 0 34 39" width="34" height="39" aria-hidden="true">
              <g fill="none" stroke="#fff" stroke-width="1.8" stroke-linejoin="round">
                <path d="M14 4.5C14 0 19.5 0 19.5 4.5C25 6 27.5 11 27.5 16.5V23.5C27.5 26.5 32 28 32 31.5H1.5C1.5 28 6.5 26.5 6.5 23.5V16.5C6.5 11 9 6 14 4.5Z" />
                <path d="M11 32C11 39.5 22.5 39.5 22.5 32" />
              </g><circle cx="25.5" cy="9" r="7.5" fill="#fff" />
            </svg></a>
            <a class="basket" href="#" aria-label="Giỏ hàng"><svg viewBox="0 0 40 38" width="40" height="38" aria-hidden="true">
              <g fill="none" stroke="#fff" stroke-width="1.8" stroke-linejoin="round">
                <path d="M3 13H37Q39 13 38.5 15.5L38 17.5Q37.5 19.5 35 20L32.5 34Q32 36.5 29.5 36.5H10.5Q8 36.5 7.5 34L5 20Q2.5 19.5 2 17.5L1.5 15.5Q1 13 3 13Z" />
                <path d="M10 10L16 2M30 10L24 2" stroke-width="3.2" stroke-linecap="round" />
                <path d="M13.5 22V32M18 22V32M22.5 22V32M27 22V32" stroke-width="2.6" />
              </g>
            </svg></a>
            <a class="login" href="#">
              <svg viewBox="0 0 36 36" width="36" height="36" aria-hidden="true"><circle cx="18" cy="18" r="16.8" fill="none" stroke="#fff" stroke-width="2" /><circle cx="18" cy="14" r="6.6" fill="#fff" /><path d="M6.5 30C8 24.5 12 22.5 18 22.5S28 24.5 29.5 30A17 17 0 0 1 6.5 30Z" fill="#fff" /></svg>
              <span>Đăng nhập<br />/ Đăng ký</span>
            </a>
          </div>
        </div>
      </div>
      <nav class="menu"><div class="wrap menu-grid"><a class="home" href="#" aria-label="Trang chủ">${homeIcon}</a>${mainNav.map((e) => this.entry(e))}</div></nav>
    </header>`;
  }

  private form() {
    return html`<form @submit=${(e: Event) => e.preventDefault()}>
      <h2 class="heading">LIÊN HỆ VỚI CHÚNG TÔI</h2>
      <p class="lead">Chúng tôi muốn nghe câu hỏi và ý kiến đóng góp từ bạn. Hay phản hồi cho Tuongtac.tv vấn đề của bạn nhé! Chúng tôi sẽ liên hệ với bạn trong 24h tiếp theo.</p>
      ${fields.map((f) => html`<div class="field"><label class="caption" for=${f.id}>${f.label}</label><input class="box" id=${f.id} type=${f.type} placeholder=${f.hint} /></div>`)}
      <div class="field field-last"><label class="caption" for="message">Nội dung</label><textarea class="box area-box" id="message" placeholder="Nhập nội dung....."></textarea></div>
      <button class="send" type="submit">Gửi liên hệ</button>
    </form>`;
  }

  private footer() {
    const list = (title: string, items: string[]) => html`<div><h3 class="foot-title">${title}</h3><ul class="links">${items.map((t) => html`<li><a href="#">${t}</a></li>`)}</ul></div>`;
    return html`<footer>
      <nav class="foot-menu"><div class="wrap foot-grid">
        <a class="home" href="#" aria-label="Trang chủ">${homeIcon}</a>
        ${footerNav.map((e) => this.entry(e))}
        <a class="to-top" href="#">Về đầu trang
          <svg viewBox="0 0 25 25" width="25" height="25" aria-hidden="true"><circle cx="12.5" cy="12.5" r="12.5" fill="#4b3570" /><path d="M6.5 14L12.5 9L18.5 14" fill="none" stroke="#fff" stroke-width="1.3" /></svg>
        </a>
      </div></nav>
      <div class="wrap foot-cols">
        ${list("CHĂM SÓC KHÁCH HÀNG", careLinks)}
        ${list("VỀ TUONGTAC.TV", aboutLinks)}
        <div><h3 class="foot-title">THEO DÕI TRÊN</h3>
          <div class="social">
            <a class="social-link" href="#">${facebookIcon(24)}Facebook</a>
            <a class="social-link" href="#">${youtubeIcon(24)}Youtube</a>
            <a class="social-link" href="#">${tiktokIcon(24)}Tiktok</a>
          </div>
        </div>
        <div><h3 class="foot-title">TẢI ỨNG DỤNG</h3>
          <div class="apps">
            <svg class="qr" viewBox="0 0 29 29" width="49" height="51" aria-hidden="true"><path d=${qrPath} fill="#111" /></svg>
            <div class="stores">
              <a class="store" href="#"><svg viewBox="0 0 19 23" width="19" height="23" aria-hidden="true"><path fill="#666" d="M13.5 0c.2 2.6-1.9 5.2-4.4 5.2C8.8 2.7 11.2.2 13.5 0zM9.7 6.7c.9 0 2.4-1.2 4.3-1.1 1.7.1 3.2.8 4.1 2.2-3.6 2.3-2.9 7.1.9 8.7-.9 2.8-2.9 6-5 6.1-1.5 0-2-.9-3.9-.9s-2.5.9-3.9.9C3.5 22.6 0 17.3 0 12.8c0-4.4 2.8-7 5.6-7.1 1.7 0 3.2 1 4.1 1z" /></svg>App Store</a>
              <a class="store" href="#"><svg class="play" viewBox="0 0 19 22" width="19" height="22" aria-hidden="true"><path d="M0 0L11 10.5L0 21.5Z" fill="#00c3ff" /><path d="M0 0L14 7.8L11 10.8Z" fill="#20d47e" /><path d="M14 7.8L19 10.8L14 13.8L11 10.8Z" fill="#ffcf1a" /><path d="M11 10.8L14 13.8L0 21.5Z" fill="#f0404c" /></svg>Google Play</a>
            </div>
          </div>
        </div>
        <form @submit=${(e: Event) => e.preventDefault()}><h3 class="foot-title">ĐĂNG KÝ NHẬN TIN</h3>
          <div class="news"><input class="news-mail" type="email" aria-label="Email của bạn" placeholder="Email của bạn" /><button class="news-go" type="submit">Đăng ký</button></div>
          <label class="agree"><input class="tick" type="checkbox" />Đồng ý với chính sách bảo mật thông tin.</label>
        </form>
      </div>
      <p class="address">Địa chỉ :  116 Lạc Trung, Vĩnh Tuy, Hai Bà Trưng, Hà Nội - Hotline: 0989 768 553  -  Giấy phép Kinh doanh số 0107641285 do Sở Kế Hoạch & Đầu Tư Thành Phố Hà Nội cấp ngày 21/11/2016</p>
    </footer>`;
  }

  render() {
    return html`${this.header()}
      <main class="wrap">
        <nav class="crumbs"><a href="#">Trang chủ</a><svg viewBox="0 0 6 10" width="6" height="10" aria-hidden="true"><path d="M1 1L5 5L1 9" fill="none" stroke="#555" /></svg><span>Liên hệ</span></nav>
        <h1 class="title">LIÊN HỆ</h1>
        <location-map></location-map>
        <div class="columns">
          ${this.form()}
          <ul class="support">
            ${[1, 2, 3].map((n) => html`<li class="agent"><span class="avatar"></span><div>
              <h3 class="agent-name">Tuongtac Support ${n}</h3>
              <p class="agent-info"><a class="chat" href="#">Chat Support</a><span>|</span><span>0243 9878732</span></p>
            </div></li>`)}
          </ul>
        </div>
      </main>
      ${this.footer()}`;
  }
}
